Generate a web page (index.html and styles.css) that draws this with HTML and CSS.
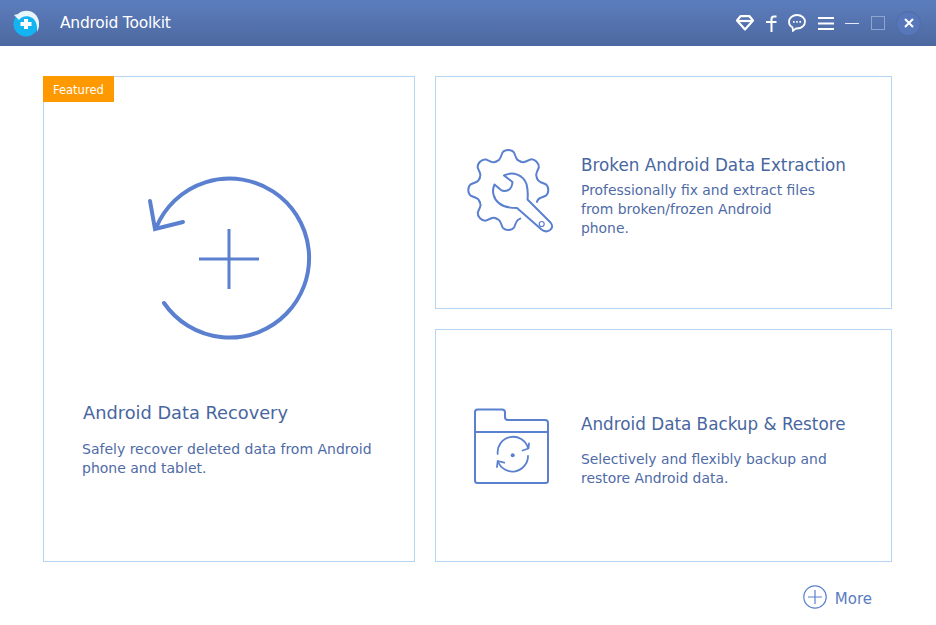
FILE: index.html
```html
<!DOCTYPE html>
<html lang="en">
<head>
  <meta charset="UTF-8">
  <title>Android Toolkit</title>
  <link rel="stylesheet" href="styles.css">
</head>
<body>

  <header class="titlebar">
    <svg class="logo" width="26" height="28" viewBox="0 0 26 28">
      <circle cx="13" cy="15" r="12.5" fill="#14b4f2"/>
      <path d="M1 6 L5 5 C10 0 19 1 23 6 C27 11 27 18 24 23 C25 15 22 9 16 7.500 C12 6.500 8 8 6 11 Z" fill="#e8f6fc"/>
      <path d="M11 10 h4 v3 h3.500 v4 h-3.500 v3 h-4 v-3 h-3.500 v-4 h3.500 Z" fill="#fff"/>
    </svg>
    <span class="app-name">Android Toolkit</span>
    <div class="tools">
      <svg width="18" height="16" viewBox="0 0 18 16" fill="none" stroke="#fff" stroke-width="2.200">
        <path d="M4.500 1.200 H13.500 L17 5.500 L9 14.500 L1 5.500 Z" stroke-linejoin="round"/>
        <path d="M2 6 H16"/>
      </svg>
      <svg width="11" height="17" viewBox="0 0 11 17" fill="none" stroke="#fff" stroke-width="2">
        <path d="M10.500 1.500 H8 Q5.500 1.500 5.500 4 V17"/>
        <path d="M0 7 H10.500"/>
      </svg>
      <svg width="18" height="18" viewBox="0 0 18 18" fill="none" stroke="#fff" stroke-width="1.800">
        <path d="M9 1 C4.500 1 1 4 1 7.700 C1 10.400 2.600 12.300 4.500 13.300 L5 16.800 L8 14.400 C8.400 14.500 8.700 14.500 9 14.500 C13.500 14.500 17 11.500 17 7.700 C17 4 13.500 1 9 1 Z"/>
        <path d="M5 7.800 H6.600 M8.200 7.800 H9.800 M11.400 7.800 H13"/>
      </svg>
      <svg width="16" height="13" viewBox="0 0 16 13" fill="#fff">
        <rect y="0" width="16" height="2"/>
        <rect y="5.500" width="16" height="2"/>
        <rect y="11" width="16" height="2"/>
      </svg>
      <span class="min-btn"></span>
      <span class="max-btn"></span>
      <span class="close-btn">
        <svg width="10" height="10" viewBox="0 0 10 10" stroke="#fff" stroke-width="2">
          <path d="M1 1 L9 9 M9 1 L1 9"/>
        </svg>
      </span>
    </div>
  </header>

  <main class="content">
    <div class="cards">

      <section class="card card-main">
        <span class="badge">Featured</span>
        <svg class="main-icon" width="170" height="170" viewBox="0 0 170 170" fill="none" stroke="#5a80cf" stroke-width="4" stroke-linecap="round">
          <path d="M20 129 A79.500 79.500 0 1 0 12 54"/>
          <path d="M6 27 L11 55 L39 48"/>
          <path d="M85 55 V115 M55 85 H115" stroke-width="3" stroke-linecap="butt"/>
        </svg>
        <h2>Android Data Recovery</h2>
        <p>Safely recover deleted data from Android phone and tablet.</p>
      </section>

      <section class="card card-side card-extract">
        <div class="icon-box">
          <svg width="110" height="105" viewBox="0 0 110 105" fill="none" stroke="#5a80cf" stroke-width="2" stroke-linejoin="round" stroke-linecap="round">
            <defs>
              <path id="tooth" d="M41.400 21.400 Q44.500 20.500 45.500 17.500 L47.500 12.500 Q49.500 10 53.300 10 Q57 10 59 12.500 L61 17.500 Q62 20.500 65.200 21.400"/>
            </defs>
            <use href="#tooth" transform="rotate(0 53.300 50)"/>
            <use href="#tooth" transform="rotate(45 53.300 50)"/>
            <use href="#tooth" transform="rotate(90 53.300 50)"/>
            <use href="#tooth" transform="rotate(180 53.300 50)"/>
            <use href="#tooth" transform="rotate(225 53.300 50)"/>
            <use href="#tooth" transform="rotate(270 53.300 50)"/>
            <use href="#tooth" transform="rotate(315 53.300 50)"/>
            <path d="M49 35.500 C58 31 68 35 71.500 44 C73 50 73 55 72.500 59.500 L95.500 82.500 Q99 87 95 90 Q90.500 93 86.500 89.500 L62 68 C52 68 41 65 38.500 54.500 C37.500 51 38 48 39.500 44.500 L46 50 Q49 52 53.500 50 Q57 48 57.500 42 Z"/>
            <circle cx="86.700" cy="84" r="2.500" stroke-width="1.200"/>
          </svg>
        </div>
        <div class="side-text">
          <h2>Broken Android Data Extraction</h2>
          <p>Professionally fix and extract files<br>from broken/frozen Android<br>phone.</p>
        </div>
      </section>

      <section class="card card-side card-backup">
        <div class="icon-box">
          <svg width="100" height="100" viewBox="0 0 100 100" fill="none" stroke="#5a80cf" stroke-width="2" stroke-linejoin="round" stroke-linecap="round">
            <path d="M15 16 Q15 13.500 17.500 13.500 H42 Q45 13.500 45 16.500 V21 Q45 24 48 24 H85 Q88 24 88 27 V84.500 Q88 87 85.500 87 H17.500 Q15 87 15 84.500 Z"/>
            <path d="M15 36 H88"/>
            <g stroke-width="1.800">
              <path d="M37.700 58 A15.500 15.500 0 0 1 68 52"/>
              <path d="M62.500 54.500 L68.500 52.500 L69 47.500"/>
              <path d="M68 60 A15.500 15.500 0 0 1 38 65.500"/>
              <path d="M37 71 L37.700 65 L44.300 66.700"/>
            </g>
            <circle cx="52.700" cy="59.300" r="2" fill="#5a80cf" stroke="none"/>
          </svg>
        </div>
        <div class="side-text">
          <h2>Android Data Backup &amp; Restore</h2>
          <p>Selectively and flexibly backup and<br>restore Android data.</p>
        </div>
      </section>

    </div>
    <div class="more-row">
      <svg width="24" height="24" viewBox="0 0 24 24" fill="none" stroke="#5a80cf" stroke-width="1.200">
        <circle cx="12" cy="12" r="11.200"/>
        <path d="M12 5 V19 M5 12 H19"/>
      </svg>
      <span class="more-label">More</span>
    </div>
  </main>

</body>
</html>
```

FILE: styles.css
```css
* {
  box-sizing: border-box;
}

body {
  margin: 0;
  width: 936px;
  height: 625px;
  overflow: hidden;
  background: #fff;
  font-family: 'DejaVu Sans', sans-serif;
  color: #48669f;
}

svg {
  display: block;
}

.titlebar {
  display: flex;
  align-items: center;
  height: 46px;
  padding: 0 15px 0 13px;
  background: linear-gradient(to bottom, #5c7dbd, #4c689f);
  color: #fff;
}

.app-name {
  margin-left: 21px;
  font-size: 15.500px;
  letter-spacing: -0.250px;
}

.tools {
  display: flex;
  align-items: center;
  margin-left: auto;
  gap: 11.500px;
}

.min-btn {
  width: 14px;
  height: 1px;
  background: #e3e9f5;
}

.max-btn {
  width: 14px;
  height: 14px;
  border: 1px solid #8fa5d0;
}

.close-btn {
  display: flex;
  align-items: center;
  justify-content: center;
  width: 25px;
  height: 25px;
  border: 1px solid #4f6ca8;
  border-radius: 50%;
  background: #5877bb;
}

.content {
  padding: 30px 44px 0 43px;
}

.cards {
  display: grid;
  grid-template-columns: 372px 457px;
  grid-template-rows: 233px 233px;
  gap: 20px;
}

.card {
  border: 1px solid #b5d5f3;
  position: relative;
}

.card-main {
  grid-row: span 2;
  padding: 97px 30px 0 38px;
}

.card-side {
  display: flex;
  align-items: center;
}

.badge {
  position: absolute;
  top: -1px;
  left: -1px;
  padding: 1px 10px 0;
  height: 26px;
  line-height: 26px;
  font-size: 11.500px;
  background: #ff9900;
  color: #fff;
}

.main-icon {
  margin-left: 62px;
}

.icon-box {
  flex: none;
  width: 145px;
}

.card-extract .icon-box {
  padding-left: 19px;
}

.card-backup .icon-box {
  padding-left: 24px;
}

.card-extract .side-text {
  margin-top: 7px;
}

.card-extract h2 {
  margin-bottom: 5px;
}

.card-backup .side-text {
  margin-top: 9px;
}

.card-backup h2 {
  margin-bottom: 15px;
}

h2 {
  margin: 0;
  font-weight: normal;
  font-size: 16.800px;
  line-height: 22px;
}

.card-main h2 {
  margin: 57px 0 0 1px;
  font-size: 17.800px;
  line-height: 24px;
}

p {
  margin: 0;
  font-size: 13.900px;
  line-height: 19px;
  color: #4f6ba6;
}

.card-main p {
  margin-top: 15px;
  font-size: 14px;
}

.more-row {
  display: flex;
  align-items: center;
  justify-content: flex-end;
  gap: 8px;
  margin-top: 23px;
  padding-right: 20px;
}

.more-label {
  padding-top: 3px;
  font-size: 15px;
  color: #5a7cc0;
}
```
